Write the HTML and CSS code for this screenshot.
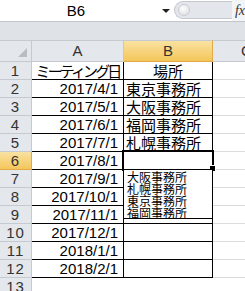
FILE: index.html
```html
<!DOCTYPE html>
<html lang="ja">
  <head>
    <meta charset="UTF-8" />
    <title>Excel</title>
    <link rel="stylesheet" href="styles.css">
  </head>
  <body>
    <div class="fbar">
      <div class="namebox">
        <span class="name">B6</span>
        <span class="arrow"></span>
      </div>
      <div class="grip"><span class="dot"></span></div>
      <div class="fx">fx</div>
    </div>
    <div class="band"></div>

    <div class="sheet">
      <div class="h corner"><span class="tri"></span></div>
      <div class="h">A</div>
      <div class="h sel">B</div>
      <div class="h edge">C</div>

      <div class="rh">1</div>
      <div class="t ctr"><span class="squeeze">ミーティング日</span></div>
      <div class="t ctr">場所</div>
      <div class="c"></div>

      <div class="rh">2</div>
      <div class="t d">2017/4/1</div>
      <div class="t jp">東京事務所</div>
      <div class="c"></div>

      <div class="rh">3</div>
      <div class="t d">2017/5/1</div>
      <div class="t jp">大阪事務所</div>
      <div class="c"></div>

      <div class="rh">4</div>
      <div class="t d">2017/6/1</div>
      <div class="t jp">福岡事務所</div>
      <div class="c"></div>

      <div class="rh">5</div>
      <div class="t d">2017/7/1</div>
      <div class="t jp">札幌事務所</div>
      <div class="c"></div>

      <div class="rh sel">6</div>
      <div class="t d">2017/8/1</div>
      <div class="t"></div>
      <div class="c"></div>

      <div class="rh">7</div>
      <div class="t d">2017/9/1</div>
      <div class="t"></div>
      <div class="c"></div>

      <div class="rh">8</div>
      <div class="t d">2017/10/1</div>
      <div class="t"></div>
      <div class="c"></div>

      <div class="rh">9</div>
      <div class="t d">2017/11/1</div>
      <div class="t"></div>
      <div class="c"></div>

      <div class="rh">10</div>
      <div class="t d">2017/12/1</div>
      <div class="t"></div>
      <div class="c"></div>

      <div class="rh">11</div>
      <div class="t d">2018/1/1</div>
      <div class="t"></div>
      <div class="c"></div>

      <div class="rh">12</div>
      <div class="t d">2018/2/1</div>
      <div class="t"></div>
      <div class="c"></div>

      <div class="rh">13</div>
      <div class="c"></div>
      <div class="c"></div>
      <div class="c"></div>

      <!-- active cell B6 and its open list -->
      <div class="cursor"></div>
      <div class="handle"></div>
      <div class="list">
        <div>大阪事務所</div>
        <div>札幌事務所</div>
        <div>東京事務所</div>
        <div>福岡事務所</div>
      </div>
    </div>
  </body>
</html>
```

FILE: styles.css
```css
body {
  margin: 0;
  width: 245px;
  height: 291px;
  overflow: hidden;
  background: #fff;
  font-family: "Liberation Sans", "Noto Sans CJK JP", sans-serif;
  font-size: 15px;
  color: #000;
}
.fbar {
  display: flex;
  height: 21px;
  border-bottom: 1px solid #c2c7cf;
  background: #fff;
}
.namebox {
  width: 175px;
  display: flex;
  align-items: center;
}
.name {
  width: 152px;
  text-align: center;
}
.arrow {
  margin-left: 10px;
  width: 0;
  height: 0;
  border-left: 4px solid transparent;
  border-right: 4px solid transparent;
  border-top: 4px solid #222;
}
.grip {
  width: 58px;
  margin-top: 1px;
  height: 18px;
  box-sizing: border-box;
  background: #e3e6ea;
  border: 1px solid #c4c8ce;
  border-right: none;
  border-radius: 10px 0 0 10px;
  display: flex;
  align-items: center;
  padding-left: 3px;
}
.dot {
  width: 10px;
  height: 10px;
  border-radius: 50%;
  background: radial-gradient(circle at 40% 35%, #fdfdfe, #d9dce1);
  border: 1px solid #c9cdd3;
}
.fx {
  flex: 1;
  padding-left: 3px;
  font-family: "Liberation Serif", serif;
  font-style: italic;
  font-size: 14px;
  line-height: 21px;
  color: #333;
  background: #f3f4f6;
}
.band {
  height: 18px;
  background: #dfe2e7;
}
.sheet {
  position: relative;
  display: grid;
  grid-template-columns: 32px 92px 89px 1fr;
  grid-template-rows: 22px repeat(13, 18px);
}
.sheet > div {
  box-sizing: border-box;
  border-right: 1px solid #dadcdd;
  border-bottom: 1px solid #dadcdd;
  line-height: 17px;
  white-space: nowrap;
}
.sheet .h {
  background: #e4e7eb;
  border-top: 1px solid #c5cad1;
  border-right-color: #c5cad1;
  border-bottom-color: #c5cad1;
  line-height: 20px;
  text-align: center;
  color: #333;
}
.sheet .edge {
  text-align: left;
  padding-left: 28px;
  border-right: none;
}
.sheet .corner {
  display: flex;
  justify-content: flex-end;
  align-items: flex-end;
  padding: 0 4px 4px 0;
}
.tri {
  width: 0;
  height: 0;
  border-left: 9px solid transparent;
  border-bottom: 9px solid #b9bdc3;
}
.sheet .rh {
  background: #e4e7eb;
  border-right-color: #c5cad1;
  border-bottom-color: #c5cad1;
  text-align: center;
  color: #333;
  letter-spacing: 1px;
}
.sheet .sel {
  background: linear-gradient(#f9e2a2, #f4c65a);
  border-right-color: #e0ab45;
  border-bottom-color: #e0ab45;
}
.sheet .t {
  border-right-color: #000;
  border-bottom-color: #000;
}
.sheet .c {
  border-right: none;
}
.d {
  text-align: right;
  padding-right: 5px;
}
.ctr {
  text-align: center;
  font-family: "Noto Sans CJK JP", sans-serif;
}
.jp {
  padding-left: 2px;
  font-family: "Noto Sans CJK JP", sans-serif;
}
.squeeze {
  letter-spacing: -2.9px;
}
.sheet .cursor {
  position: absolute;
  left: 122px;
  top: 110px;
  width: 92px;
  height: 21px;
  border: 2px solid #000;
}
.sheet .handle {
  position: absolute;
  left: 209px;
  top: 125px;
  width: 7px;
  height: 7px;
  background: #000;
  border: 1px solid #fff;
}
.sheet .list {
  position: absolute;
  left: 123px;
  top: 129px;
  width: 90px;
  height: 50px;
  border: 1px solid #000;
  background: #fff;
  padding: 1px 0 0 3px;
  font-family: "Noto Sans CJK JP", sans-serif;
  font-size: 12px;
  line-height: 12px;
}
```
